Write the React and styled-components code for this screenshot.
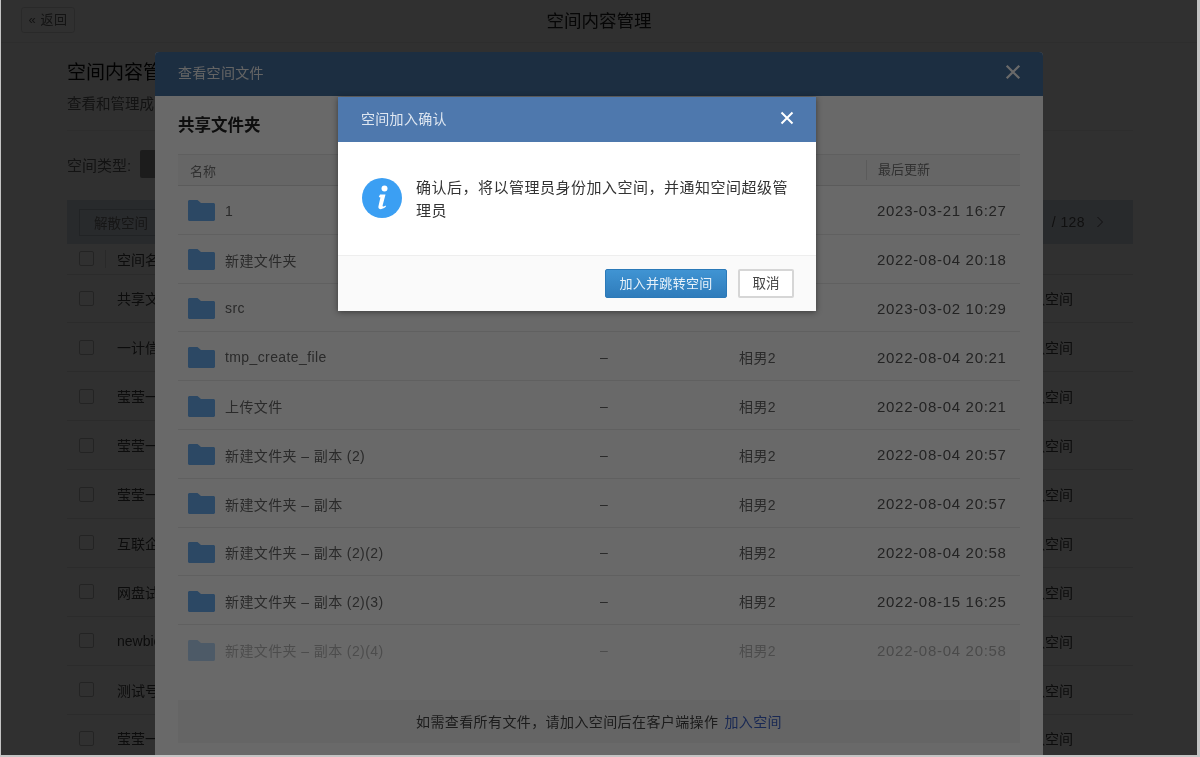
import React from 'react';
import styled, { createGlobalStyle } from 'styled-components';

const Global = createGlobalStyle`
  html, body { margin: 0; padding: 0; background: #c4c4c4; }
  body { font-family: "Liberation Sans", "Noto Sans CJK SC", sans-serif; overflow: hidden; }
  * { box-sizing: border-box; }
`;

const Page = styled.div`
  position: relative;
  width: 1196px;
  height: 755px;
  margin-left: 1px;
  overflow: hidden;
  background: #fff;
  color: #333;
  filter: blur(0.45px);
`;
const TopBar = styled.header`
  height: 43px;
  position: relative;
  display: flex;
  align-items: center;
  justify-content: center;
  padding-bottom: 3px;
  border-bottom: 1px solid #eee;
`;
const BackButton = styled.button`
  position: absolute;
  left: 20px;
  top: 7px;
  width: 54px;
  height: 26px;
  border: 1px solid #ddd;
  border-radius: 3px;
  background: #fff;
  font: 13px "Liberation Sans", "Noto Sans CJK SC", sans-serif;
  letter-spacing: 0.5px;
  color: #666;
  padding: 0 0 3px;
`;
const PageTitle = styled.h1`
  margin: 0;
  font-size: 17.5px;
  font-weight: 400;
  color: #222;
`;
const Content = styled.main`
  padding: 16px 64px 0 66px;
`;
const Heading = styled.h2`
  margin: 0;
  font-size: 19px;
  line-height: 28px;
  font-weight: 400;
  color: #111;
`;
const SubHeading = styled.p`
  margin: 7px 0 0;
  padding-bottom: 16px;
  font-size: 14.5px;
  line-height: 20px;
  color: #666;
  border-bottom: 1px solid #eee;
`;
const Filter = styled.div`
  margin-top: 19px;
  height: 28px;
  display: flex;
  align-items: center;
  gap: 9px;
  font-size: 15px;
  color: #666;
`;
const FilterChip = styled.span`
  width: 60px;
  height: 28px;
  background: #999;
  border-radius: 2px;
`;
const ActionBar = styled.div`
  margin-top: 22px;
  height: 44px;
  background: #d8dfeb;
  display: flex;
  align-items: center;
  justify-content: space-between;
  padding: 0 29px 0 12px;
  font-size: 13px;
  color: #555;
`;
const GhostButton = styled.button`
  width: 84px;
  height: 27px;
  border: 1px solid #b4bac4;
  background: transparent;
  font: 13.5px "Liberation Sans", "Noto Sans CJK SC", sans-serif;
  color: #777;
  padding: 0;
`;
const Pager = styled.span`
  display: flex;
  align-items: center;
  gap: 11px;
  font-size: 14px;
  letter-spacing: 0.4px;
  color: #555;
`;
const PagerCurrent = styled.span`
  padding-right: 14px;
`;
const SpaceRows = styled.div`
  display: flex;
  flex-direction: column;
`;
const SpaceRow = styled.div`
  height: ${p => p.$head ? 30.5 : 48.9}px;
  flex: none;
  display: flex;
  align-items: center;
  padding: 0 12px;
  border-bottom: 1px solid #e8e8e8;
  font-size: 14px;
  color: #444;
`;
const Check = styled.span`
  width: 15px;
  height: 15px;
  border: 1px solid #bbb;
  border-radius: 2px;
  flex: none;
`;
const HeadDivider = styled.span`
  width: 1px;
  height: 18px;
  background: #ddd;
  margin-left: 11px;
  margin-right: -12px;
`;
const SpaceName = styled.span`
  flex: 1;
  margin-left: 23px;
`;
const SpaceTag = styled.span`
  font-size: 14px;
  margin-right: 48px;
`;

const Scrim = styled.div`
  position: absolute;
  inset: 0;
  background: rgba(0, 0, 0, ${p => p.$alpha});
`;
const FilesDialog = styled.section`
  position: absolute;
  left: 154px;
  top: 52px;
  width: 888px;
  height: 703px;
  background: #fff;
  border-radius: 4px 4px 0 0;
  overflow: hidden;
`;
const FilesHeader = styled.div`
  height: 44px;
  padding: 0 22px 4px 23px;
  background: #46709f;
  color: #f2f2f2;
  display: flex;
  align-items: center;
  justify-content: space-between;
  font-size: 14px;
  letter-spacing: 0.3px;
`;
const CloseBtn = styled.span`
  display: flex;
  color: #fff;
`;
const FilesBody = styled.div`
  padding: 0 23px;
`;
const FolderTitle = styled.h3`
  margin: 0;
  height: 58px;
  line-height: 58px;
  font-size: 16.5px;
  font-weight: 700;
  color: #222;
`;
const Grid = `
  display: grid;
  grid-template-columns: 412px 139px 138px 1fr;
  align-items: center;
`;
const TableHead = styled.div`
  ${Grid}
  height: 32px;
  background: #f8f8f8;
  border-top: 1px solid #e6e6e6;
  border-bottom: 1px solid #dedede;
  padding-left: 10px;
  font-size: 13px;
  color: #777;
`;
const FirstHead = styled.span`
  padding-left: 2px;
`;
const LastHead = styled.span`
  grid-column: 4;
  border-left: 1px solid #ddd;
  padding-left: 11px;
  margin-left: -11px;
  line-height: 20px;
`;
const Row = styled.div`
  ${Grid}
  height: 48.8px;
  padding: 2px 0 0 10px;
  border-bottom: 1px solid ${p => p.$last ? 'transparent' : '#e8e8e8'};
  font-size: 14px;
  letter-spacing: 0.4px;
  color: #666;
  opacity: ${p => p.$faded ? 0.45 : 1};
`;
const NameCell = styled.span`
  display: flex;
  align-items: center;
  gap: 10px;
`;
const DateCell = styled.span`
  font-size: 15px;
  letter-spacing: 0.7px;
  color: #555;
  white-space: nowrap;
`;
const FooterNote = styled.div`
  margin-top: 26px;
  height: 43px;
  background: #f5f5f5;
  display: flex;
  align-items: center;
  justify-content: center;
  gap: 6px;
  font-size: 14px;
  letter-spacing: 0.4px;
  color: #444;
`;
const NoteLink = styled.a`
  color: #3e63c9;
`;
const ConfirmDialog = styled.section`
  position: absolute;
  left: 337px;
  top: 97px;
  width: 478px;
  height: 214px;
  background: #fff;
  box-shadow: 0 1px 6px rgba(0, 0, 0, .45);
  display: flex;
  flex-direction: column;
`;
const ConfirmHeader = styled.div`
  height: 45px;
  padding: 0 22px 3px 23px;
  background: #4e78ad;
  color: #dfe7f1;
  display: flex;
  align-items: center;
  justify-content: space-between;
  font-size: 14px;
  letter-spacing: 0.3px;
`;
const ConfirmBody = styled.div`
  flex: 1;
  display: flex;
  gap: 14px;
  padding: 34px 22px 0 24px;
  font-size: 15px;
  letter-spacing: 0.5px;
  line-height: 23px;
  color: #333;
`;
const InfoIcon = styled.svg`
  flex: none;
  margin-top: 2px;
`;
const ConfirmText = styled.p`
  margin: 0;
`;
const ConfirmFooter = styled.div`
  height: 56px;
  background: #fafafa;
  border-top: 1px solid #eee;
  display: flex;
  align-items: center;
  justify-content: flex-end;
  gap: 11px;
  padding: 0 22px 0 0;
`;
const PrimaryButton = styled.button`
  width: 122px;
  height: 29px;
  border: 1px solid #2b79b8;
  border-radius: 2px;
  background: linear-gradient(#4094d3, #2f7cbb);
  color: #e8f2fa;
  font: 13px "Liberation Sans", "Noto Sans CJK SC", sans-serif;
  letter-spacing: 0.3px;
  padding: 0 0 3px;
`;
const CancelButton = styled.button`
  width: 56px;
  height: 29px;
  border: 2px solid #d6d6d6;
  border-radius: 2px;
  background: #fff;
  color: #444;
  font: 13.5px "Liberation Sans", "Noto Sans CJK SC", sans-serif;
  padding: 0 0 3px;
`;

const Folder = () => (
  <svg width="27" height="21" viewBox="0 0 27 21" aria-hidden="true">
    <path d="M1.5 0H9.5L13 3H25.5C26.3 3 27 3.7 27 4.5V19.5C27 20.3 26.3 21 25.5 21H1.5C.7 21 0 20.3 0 19.5V1.5C0 .7.7 0 1.5 0Z" fill="#6cb0f2" />
  </svg>
);
const Cross = ({ size }) => (
  <svg width={size} height={size} viewBox="0 0 14 14" aria-hidden="true">
    <path d="M1.5 1.5L12.5 12.5M12.5 1.5L1.5 12.5" stroke="currentColor" strokeWidth="2" fill="none" />
  </svg>
);
const Chevron = () => (
  <svg width="8" height="12" viewBox="0 0 8 12" aria-hidden="true">
    <path d="M1.5 1L6.5 6L1.5 11" stroke="currentColor" strokeWidth="1" fill="none" />
  </svg>
);

const files = [
  ['1', '', '', '2023-03-21 16:27'],
  ['新建文件夹', '', '', '2022-08-04 20:18'],
  ['src', '', '', '2023-03-02 10:29'],
  ['tmp_create_file', '–', '相男2', '2022-08-04 20:21'],
  ['上传文件', '–', '相男2', '2022-08-04 20:21'],
  ['新建文件夹 – 副本 (2)', '–', '相男2', '2022-08-04 20:57'],
  ['新建文件夹 – 副本', '–', '相男2', '2022-08-04 20:57'],
  ['新建文件夹 – 副本 (2)(2)', '–', '相男2', '2022-08-04 20:58'],
  ['新建文件夹 – 副本 (2)(3)', '–', '相男2', '2022-08-15 16:25'],
  ['新建文件夹 – 副本 (2)(4)', '–', '相男2', '2022-08-04 20:58'],
];
const spaces = ['共享文件夹', '一计信息', '莹莹一', '莹莹一', '莹莹一', '互联企业', '网盘试用', 'newbie', '测试号', '莹莹一'];

export default function App() {
  return (
    <Page>
      <Global />
      <TopBar>
        <BackButton>« 返回</BackButton>
        <PageTitle>空间内容管理</PageTitle>
      </TopBar>
      <Content>
        <Heading>空间内容管理</Heading>
        <SubHeading>查看和管理成员空间</SubHeading>
        <Filter>空间类型: <FilterChip /></Filter>
        <ActionBar>
          <GhostButton>解散空间</GhostButton>
          <Pager><span><PagerCurrent>1</PagerCurrent>/ 128</span><Chevron /></Pager>
        </ActionBar>
        <SpaceRows>
          <SpaceRow $head>
            <Check />
            <HeadDivider />
            <SpaceName>空间名称</SpaceName>
          </SpaceRow>
          {spaces.map((s, i) => (
            <SpaceRow key={i}>
              <Check />
              <SpaceName>{s}</SpaceName>
              <SpaceTag>团队空间</SpaceTag>
            </SpaceRow>
          ))}
        </SpaceRows>
      </Content>
      <Scrim $alpha={0.54} />
      <FilesDialog>
        <FilesHeader>
          查看空间文件
          <CloseBtn><Cross size={16} /></CloseBtn>
        </FilesHeader>
        <FilesBody>
          <FolderTitle>共享文件夹</FolderTitle>
          <TableHead>
            <FirstHead>名称</FirstHead>
            <LastHead>最后更新</LastHead>
          </TableHead>
          {files.map((f, i) => (
            <Row key={i} $faded={i === 9} $last={i === 9}>
              <NameCell><Folder />{f[0]}</NameCell>
              <span>{f[1]}</span>
              <span>{f[2]}</span>
              <DateCell>{f[3]}</DateCell>
            </Row>
          ))}
          <FooterNote>如需查看所有文件，请加入空间后在客户端操作 <NoteLink>加入空间</NoteLink></FooterNote>
        </FilesBody>
      </FilesDialog>
      <Scrim $alpha={0.59} />
      <ConfirmDialog>
        <ConfirmHeader>
          空间加入确认
          <CloseBtn><Cross size={14} /></CloseBtn>
        </ConfirmHeader>
        <ConfirmBody>
          <InfoIcon width="40" height="40" viewBox="0 0 40 40" aria-hidden="true">
            <circle cx="20" cy="20" r="20" fill="#3b9ff3" />
            <circle cx="22.5" cy="10.5" r="3" fill="#fff" />
            <path d="M18 16.5H23.5L20.6 27.5C20.3 28.7 21.4 29 23.6 27.4L24 28.6C21.8 31.4 15.8 32.6 16.4 28.4L18.4 19.5L16.8 19Z" fill="#fff" />
          </InfoIcon>
          <ConfirmText>确认后，将以管理员身份加入空间，并通知空间超级管理员</ConfirmText>
        </ConfirmBody>
        <ConfirmFooter>
          <PrimaryButton>加入并跳转空间</PrimaryButton>
          <CancelButton>取消</CancelButton>
        </ConfirmFooter>
      </ConfirmDialog>
    </Page>
  );
}
